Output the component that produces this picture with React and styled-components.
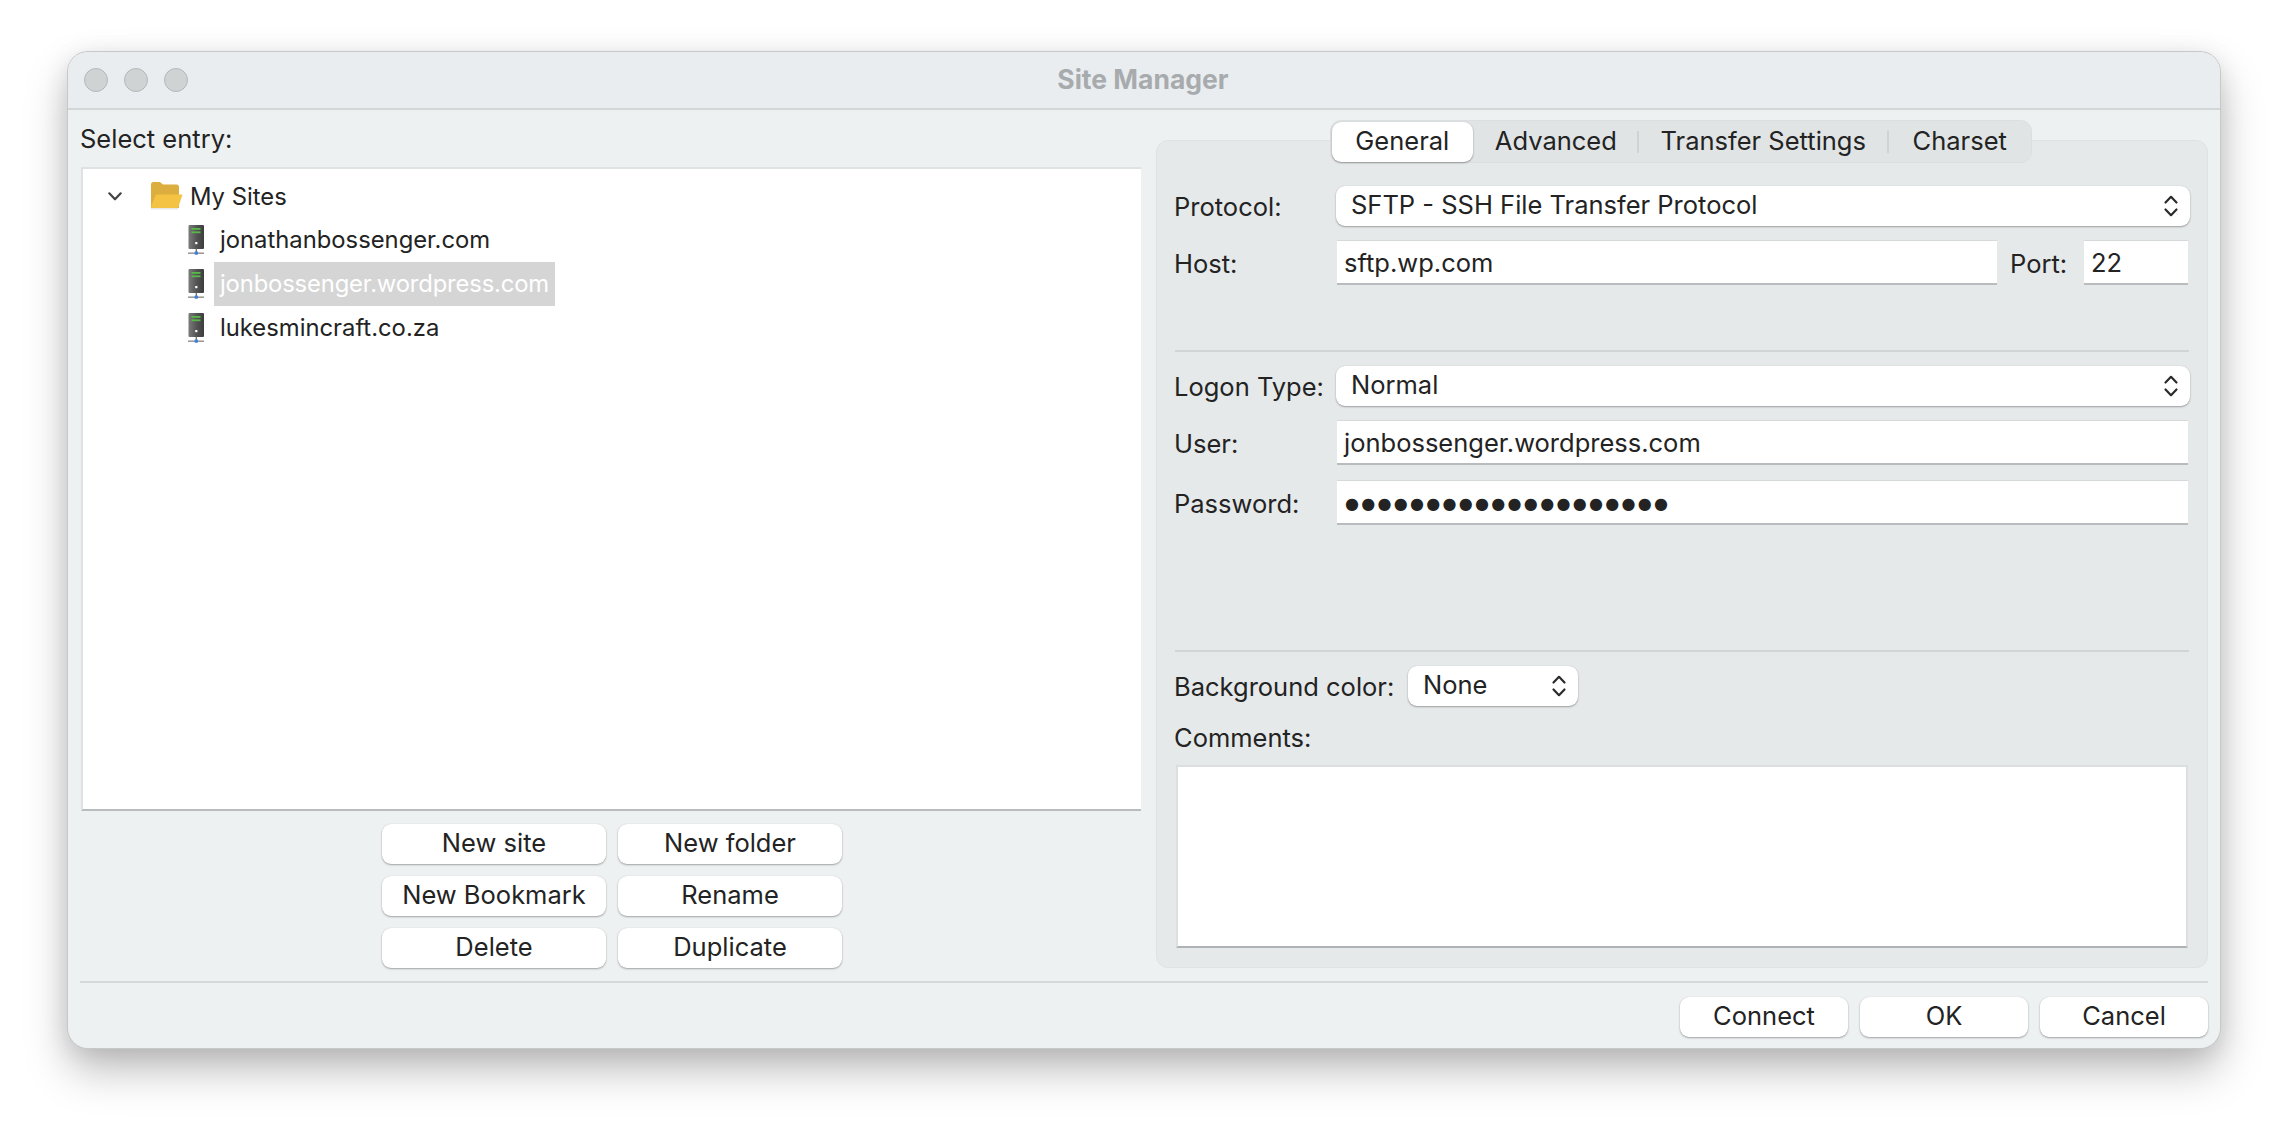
import React from 'react';
import styled, { createGlobalStyle } from 'styled-components';

const GlobalStyle = createGlobalStyle`
  html, body {
    margin: 0;
    padding: 0;
    background: #ffffff;
  }
  body {
    font-family: Inter, "Liberation Sans", sans-serif;
    font-size: 25.5px;
    color: #232323;
  }
  * {
    box-sizing: border-box;
  }
`;

const Page = styled.div`
  width: 2288px;
  height: 1132px;
  padding: 52px 68px 84px;
  overflow: hidden;
`;

const Window = styled.div`
  width: 2152px;
  height: 996px;
  display: flex;
  flex-direction: column;
  background: #eef1f2;
  border-radius: 20px;
  box-shadow: 0 0 0 1px #c6c9ca, 0 22px 44px rgba(0, 0, 0, 0.26), 0 4px 24px rgba(0, 0, 0, 0.1);
  overflow: hidden;
`;

const TitleBar = styled.div`
  height: 58px;
  flex: none;
  display: grid;
  grid-template-columns: 1fr auto 1fr;
  align-items: center;
  padding: 0 16px;
  background: #e9edef;
  border-bottom: 2px solid #d3d6d7;
`;

const Lights = styled.div`
  display: flex;
  gap: 16px;
`;

const Light = styled.span`
  width: 24px;
  height: 24px;
  border-radius: 50%;
  background: #d0d3d4;
  border: 1px solid #b4b7b8;
`;

const Title = styled.div`
  font-weight: 700;
  font-size: 26.5px;
  color: #a8abae;
  padding-bottom: 3px;
  transform: translateX(-1px);
`;

const Main = styled.div`
  height: 871px;
  flex: none;
  display: flex;
  gap: 15px;
  padding: 0 12px 0 13px;
`;

const LeftColumn = styled.div`
  width: 1060px;
  display: flex;
  flex-direction: column;
`;

const SelectLabel = styled.div`
  height: 57px;
  line-height: 58px;
  margin-left: -1px;
`;

const Tree = styled.div`
  height: 644px;
  padding-top: 5px;
  font-size: 23.8px;
  background: #ffffff;
  border-top: 2px solid #dfe2e3;
  border-left: 2px solid #dfe2e3;
  border-bottom: 2px solid #b9bcbe;
`;

const TreeRow = styled.div`
  height: 44px;
  display: flex;
  align-items: center;
  padding-left: ${(p) => p.$indent}px;
`;

const FolderName = styled.span`
  margin-left: 7px;
`;

const SiteName = styled.span`
  height: 44px;
  line-height: 44px;
  margin-left: 6px;
  padding: 0 6px;
  letter-spacing: ${(p) => (p.$selected ? '-0.15px' : 'normal')};
  background: ${(p) => (p.$selected ? '#d5d5d5' : 'transparent')};
  color: ${(p) => (p.$selected ? '#ffffff' : 'inherit')};
`;

const SiteButtons = styled.div`
  display: grid;
  grid-template-columns: repeat(2, 224px);
  grid-auto-rows: 40px;
  gap: 12px;
  justify-content: center;
  margin: 13px 0 0 2px;
`;

const Button = styled.div`
  display: flex;
  align-items: center;
  justify-content: center;
  width: ${(p) => (p.$width ? `${p.$width}px` : 'auto')};
  height: 40px;
  padding-bottom: 3px;
  background: #ffffff;
  border-radius: 9px;
  box-shadow: 0 1px 2px rgba(0, 0, 0, 0.32), 0 0 1px rgba(0, 0, 0, 0.14);
`;

const RightColumn = styled.div`
  width: 1052px;
  padding-top: 30px;
`;

const Panel = styled.div`
  height: 828px;
  display: flex;
  flex-direction: column;
  padding: 0 18px 19px;
  background: #e6e9ea;
  border: 1px solid #dfe2e3;
  border-radius: 12px;
`;

const Tabs = styled.div`
  align-self: center;
  width: 702px;
  height: 43px;
  flex: none;
  margin-top: -21px;
  display: flex;
  align-items: center;
  padding: 0 1px;
  background: #e1e4e5;
  border: 1px solid #dcdfe0;
  border-radius: 11px;
  transform: translateX(-1px);
`;

const Tab = styled.div`
  width: ${(p) => p.$width}px;
  height: 40px;
  line-height: 38px;
  text-align: center;
  border-radius: 9px;
  background: ${(p) => (p.$active ? '#ffffff' : 'transparent')};
  box-shadow: ${(p) => (p.$active ? '0 1px 2px rgba(0, 0, 0, 0.34), 0 0 1px rgba(0, 0, 0, 0.14)' : 'none')};
`;

const TabSeparator = styled.span`
  width: 2px;
  height: 22px;
  flex: none;
  background: ${(p) => (p.$hidden ? 'transparent' : '#d0d3d4')};
`;

const Row = styled.div`
  display: flex;
  align-items: center;
  margin-top: ${(p) => p.$top}px;
  margin-left: -1px;
`;

const Label = styled.div`
  width: ${(p) => (p.$width ? `${p.$width}px` : 'auto')};
  flex: none;
  padding-top: 1px;
  padding-left: ${(p) => p.$left || 0}px;
`;

const Select = styled.div`
  flex: ${(p) => (p.$width ? 'none' : 1)};
  width: ${(p) => (p.$width ? `${p.$width}px` : 'auto')};
  height: 40px;
  display: flex;
  align-items: center;
  justify-content: space-between;
  padding: 0 11px 3px 15px;
  margin-right: -1px;
  background: #ffffff;
  border-radius: 9px;
  box-shadow: 0 1px 2px rgba(0, 0, 0, 0.32), 0 0 1px rgba(0, 0, 0, 0.14);
`;

const Input = styled.div`
  flex: ${(p) => (p.$width ? 'none' : 1)};
  width: ${(p) => (p.$width ? `${p.$width}px` : 'auto')};
  height: 45px;
  line-height: 43px;
  padding: 0 7px;
  margin-left: 1px;
  margin-right: ${(p) => (p.$width ? 0 : 1)}px;
  background: #ffffff;
  border-top: 1px solid #d6d9da;
  border-bottom: 2px solid #b9bcbe;
`;

const Dots = styled.span`
  font-family: "DejaVu Sans", sans-serif;
  font-size: 16px;
  letter-spacing: 2.3px;
  margin-left: 1px;
  vertical-align: 3px;
`;

const Rule = styled.div`
  height: 2px;
  flex: none;
  background: #d2d5d6;
  margin-top: ${(p) => p.$top}px;
`;

const CommentsLabel = styled.div`
  height: 34px;
  line-height: 36px;
  flex: none;
  margin-top: 14px;
  margin-left: -1px;
`;

const Comments = styled.div`
  flex: 1;
  margin: 11px 1px 0;
  background: #ffffff;
  border: 2px solid #dcdfe0;
  border-bottom-color: #b0b3b5;
`;

const FooterRule = styled.div`
  height: 2px;
  flex: none;
  margin: 0 12px;
  background: #d6d9da;
`;

const Footer = styled.div`
  display: flex;
  justify-content: flex-end;
  gap: 12px;
  padding: 14px 12px 0;
`;

const ServerIcon = () => (
  <svg width="20" height="31" viewBox="0 0 20 31" style={{ flex: 'none' }}>
    <defs>
      <linearGradient id="serverBody" x1="0" x2="1" y1="0" y2="0">
        <stop offset="0" stopColor="#7c7c7c" />
        <stop offset="0.5" stopColor="#555555" />
        <stop offset="1" stopColor="#3d3d3d" />
      </linearGradient>
    </defs>
    <rect x="0.5" y="0" width="15.5" height="24" rx="1" fill="url(#serverBody)" />
    <rect x="3.5" y="3" width="9" height="1.8" fill="#57b947" />
    <rect x="3.5" y="6.4" width="9" height="1.8" fill="#57b947" />
    <rect x="7.2" y="17" width="2.2" height="2.2" fill="#ffffff" />
    <rect x="7.6" y="24" width="1.4" height="4" fill="#777777" />
    <rect x="0" y="27.6" width="16" height="1.1" fill="#6f6f6f" />
    <rect x="6.6" y="26.6" width="3.4" height="3.2" rx="0.8" fill="#3f7fd6" />
  </svg>
);

const FolderIcon = () => (
  <svg width="33" height="28" viewBox="0 0 33 28" style={{ flex: 'none' }}>
    <path d="M1 2.5A2.5 2.5 0 0 1 3.500 0H10l3 2.500h13.500A2.500 2.500 0 0 1 29 5v21H1z" fill="#dcae3f" />
    <path d="M5.500 13.500A1.500 1.500 0 0 1 7 12.500h25.500l-4.500 13.500H2.500A1.500 1.500 0 0 1 1 24.500z" fill="#f5c344" />
    <path d="M1 26h27v1.500H1z" fill="#e9e9e6" />
  </svg>
);

const TreeChevron = () => (
  <svg width="14" height="9" viewBox="0 0 14 9" style={{ flex: 'none', marginRight: 28 }}>
    <path d="M1.300 1.300L7 7.300l5.700-6" fill="none" stroke="#444444" strokeWidth="2.200" strokeLinecap="round" strokeLinejoin="round" />
  </svg>
);

const UpDownIcon = () => (
  <svg width="16" height="22" viewBox="0 0 16 22" style={{ flex: 'none', marginTop: 3 }}>
    <path
      d="M2.500 7.500L8 1.800l5.500 5.700M2.500 14.500L8 20.200l5.500-5.700"
      fill="none"
      stroke="#2b2b2b"
      strokeWidth="2.200"
      strokeLinecap="round"
      strokeLinejoin="round"
    />
  </svg>
);

const sites = [
  { name: 'jonathanbossenger.com' },
  { name: 'jonbossenger.wordpress.com', selected: true },
  { name: 'lukesmincraft.co.za' },
];

const siteActions = ['New site', 'New folder', 'New Bookmark', 'Rename', 'Delete', 'Duplicate'];

export default function App() {
  return (
    <Page>
      <GlobalStyle />
      <Window>
        <TitleBar>
          <Lights>
            <Light />
            <Light />
            <Light />
          </Lights>
          <Title>Site Manager</Title>
        </TitleBar>
        <Main>
          <LeftColumn>
            <SelectLabel>Select entry:</SelectLabel>
            <Tree>
              <TreeRow $indent={25}>
                <TreeChevron />
                <FolderIcon />
                <FolderName>My Sites</FolderName>
              </TreeRow>
              {sites.map((site) => (
                <TreeRow key={site.name} $indent={105}>
                  <ServerIcon />
                  <SiteName $selected={site.selected}>{site.name}</SiteName>
                </TreeRow>
              ))}
            </Tree>
            <SiteButtons>
              {siteActions.map((label) => (
                <Button key={label}>{label}</Button>
              ))}
            </SiteButtons>
          </LeftColumn>
          <RightColumn>
            <Panel>
              <Tabs>
                <Tab $width={141} $active>General</Tab>
                <TabSeparator $hidden />
                <Tab $width={163}>Advanced</Tab>
                <TabSeparator />
                <Tab $width={249}>Transfer Settings</Tab>
                <TabSeparator />
                <Tab $width={141}>Charset</Tab>
              </Tabs>
              <Row $top={23}>
                <Label $width={162}>Protocol:</Label>
                <Select>
                  SFTP - SSH File Transfer Protocol
                  <UpDownIcon />
                </Select>
              </Row>
              <Row $top={14}>
                <Label $width={162}>Host:</Label>
                <Input $width={660}>sftp.wp.com</Input>
                <Label $width={86} $left={13}>Port:</Label>
                <Input>22</Input>
              </Row>
              <Rule $top={65} />
              <Row $top={14}>
                <Label $width={162}>Logon Type:</Label>
                <Select>
                  Normal
                  <UpDownIcon />
                </Select>
              </Row>
              <Row $top={14}>
                <Label $width={162}>User:</Label>
                <Input>jonbossenger.wordpress.com</Input>
              </Row>
              <Row $top={15}>
                <Label $width={162}>Password:</Label>
                <Input>
                  <Dots>●●●●●●●●●●●●●●●●●●●●</Dots>
                </Input>
              </Row>
              <Rule $top={125} />
              <Row $top={14}>
                <Label $width={234}>Background color:</Label>
                <Select $width={170}>
                  None
                  <UpDownIcon />
                </Select>
              </Row>
              <CommentsLabel>Comments:</CommentsLabel>
              <Comments />
            </Panel>
          </RightColumn>
        </Main>
        <FooterRule />
        <Footer>
          <Button $width={168}>Connect</Button>
          <Button $width={168}>OK</Button>
          <Button $width={168}>Cancel</Button>
        </Footer>
      </Window>
    </Page>
  );
}
